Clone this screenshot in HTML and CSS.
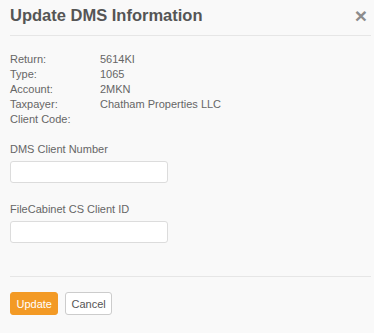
FILE: index.html
```html
<!DOCTYPE html>
<html lang="en">
<head>
    <meta charset="UTF-8">
    <meta name="viewport" content="width=device-width, initial-scale=1.0">
    <title>Update DMS Information</title>
    <link rel="stylesheet" href="styles.css">
</head>
<body>
    <div class="modal">
        <div class="modal-header">
            <h2>Update DMS Information</h2>
            <span class="close">&times;</span>
        </div>

        <div class="modal-body">
            <div class="info">
                <span>Return:</span><span>5614KI</span>
                <span>Type:</span><span>1065</span>
                <span>Account:</span><span>2MKN</span>
                <span>Taxpayer:</span><span>Chatham Properties LLC</span>
                <span>Client Code:</span><span></span>
            </div>

            <div class="field">
                <label for="dmsNumber">DMS Client Number</label>
                <input type="text" id="dmsNumber">
            </div>

            <div class="field">
                <label for="fcId">FileCabinet CS Client ID</label>
                <input type="text" id="fcId">
            </div>
        </div>

        <div class="modal-footer">
            <button class="button primary">Update</button>
            <button class="button">Cancel</button>
        </div>
    </div>
</body>
</html>
```

FILE: styles.css
```css
* {
    margin: 0;
    padding: 0;
    box-sizing: border-box;
}

body {
    font-family: "Liberation Sans", Arial, sans-serif;
    font-size: 11px;
    color: #666;
    background: #f9f9f9;
}

.modal {
    width: 374px;
    height: 333px;
    padding: 0 3px 0 10px;
}

.modal-header {
    display: flex;
    align-items: center;
    justify-content: space-between;
    padding: 5px 0 9px;
    border-bottom: 1px solid #e6e6e6;
}

.modal-header h2 {
    font-size: 16.5px;
    line-height: 21px;
    font-weight: bold;
    color: #555;
}

.close {
    font-size: 21px;
    font-weight: bold;
    line-height: 20px;
    color: #8c8c8c;
    margin-right: 4px;
}

.modal-body {
    padding-top: 16px;
}

.info {
    display: grid;
    grid-template-columns: 90px auto;
    line-height: 15px;
}

.field {
    margin-top: 15px;
}

.field + .field {
    margin-top: 19px;
}

.field label {
    display: block;
    line-height: 14px;
    margin-bottom: 5px;
}

.field input {
    display: block;
    width: 158px;
    height: 22px;
    border: 1px solid #dcdcdc;
    border-radius: 3px;
    background: white;
}

.modal-footer {
    margin-top: 33px;
    padding-top: 15px;
    border-top: 1px solid #e6e6e6;
    display: flex;
    gap: 7px;
}

.button {
    font-family: inherit;
    font-size: 11px;
    height: 23px;
    padding: 0 5px;
    border: 1px solid #ccc;
    border-radius: 3px;
    background: white;
    color: #555;
}

.button.primary {
    background: #f39a25;
    border-color: #f39a25;
    color: white;
    padding: 0 5.5px;
}
```
